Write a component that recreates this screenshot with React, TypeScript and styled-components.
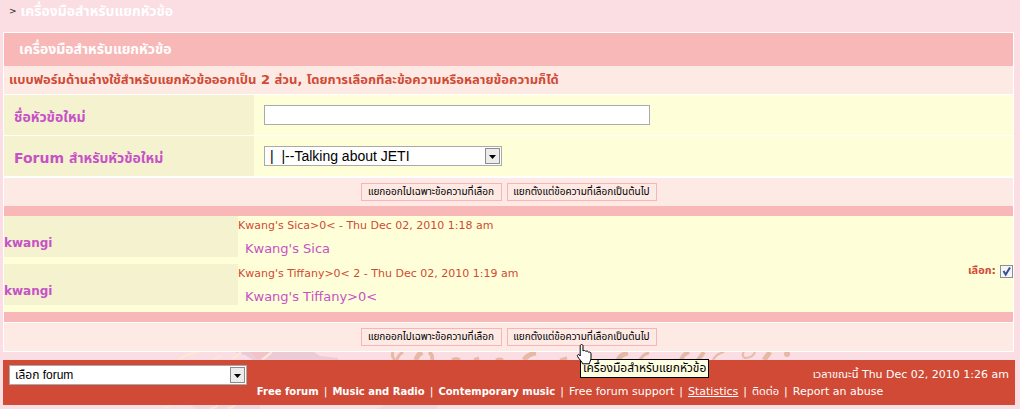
import React from "react";
import styled, { createGlobalStyle } from "styled-components";

const GlobalStyle = createGlobalStyle`
  *, *::before, *::after { box-sizing: border-box; }
  body {
    margin: 0;
    background: #fbdde4;
    color: #c652c6;
    font: 11px/14px "DejaVu Sans", "Noto Sans Thai", "Noto Sans", sans-serif;
  }
`;

const Page = styled.div`
  padding: 0 6px 0 3px;
`;

const Breadcrumb = styled.nav`
  display: flex;
  align-items: center;
  gap: 4px;
  height: 32px;
  padding: 0 6px 10px;
  color: #222;
  font-size: 9px;
`;

const Crumb = styled.a`
  color: #fff;
  font-size: 14px;
  font-weight: bold;
  text-decoration: none;
`;

const Panel = styled.form`
  display: flex;
  flex-direction: column;
  border: 1px solid #fff;
`;

const PanelTitle = styled.h1`
  margin: 0;
  padding: 8px 15px;
  background: #f8b8b8;
  color: #fff;
  font-size: 14px;
  line-height: 17px;
`;

const Intro = styled.p`
  margin: 0;
  padding: 5px;
  background: #feeae4;
  color: #d04a35;
  font-size: 13px;
  font-weight: bold;
  line-height: 18px;
`;

const Field = styled.div`
  display: grid;
  grid-template-columns: 250px 1fr;
  align-items: stretch;
  min-height: 41px;
  border-top: 1px solid #fff;
  background: #feffd8;
`;

const FieldLabel = styled.label`
  display: flex;
  align-items: center;
  padding: 4px 10px 0;
  background: #f5f2d0;
  font-size: 14px;
  font-weight: bold;
`;

const FieldControl = styled.div`
  display: flex;
  align-items: center;
  padding: 0 10px;
`;

const TextInput = styled.input`
  width: 386px;
  height: 20px;
  padding: 0 4px;
  border: 1px solid #aaa;
  background: #fff;
  font: 13px "Liberation Sans", sans-serif;
`;

const SelectFrame = styled.span<{ $width: number }>`
  position: relative;
  display: block;
  width: ${(p) => p.$width}px;
  height: 20px;
`;

const Select = styled.select<{ $size: number }>`
  appearance: none;
  display: block;
  width: 100%;
  height: 20px;
  padding: 0 20px 0 5px;
  border: 1px solid #aaa;
  border-radius: 0;
  background: #fff;
  color: #000;
  font: ${(p) => p.$size}px "Liberation Sans", "Noto Sans Thai", sans-serif;
`;

const SelectArrow = styled.svg`
  position: absolute;
  top: 2px;
  right: 2px;
  pointer-events: none;
`;

const Actions = styled.div<{ $line: number }>`
  display: flex;
  justify-content: center;
  align-items: center;
  gap: 5px;
  padding: 5px 0;
  border-top: ${(p) => p.$line}px solid #fff;
  background: #feeae4;
`;

const ActionButton = styled.button<{ $width: number }>`
  width: ${(p) => p.$width}px;
  height: 18px;
  padding: 0;
  border: 1px solid #f8b4b8;
  background: #feeae4;
  color: #000;
  font: 10px/14px "Liberation Sans", "Noto Sans Thai", sans-serif;
  white-space: nowrap;
`;

const Bar = styled.div`
  height: 10px;
  background: #f8b8b8;
`;

const Posts = styled.div`
  display: flex;
  flex-direction: column;
  background: #feffd8;
`;

const Post = styled.article`
  display: grid;
  grid-template-columns: 234px 1fr auto;
  align-items: start;
  height: 48px;
`;

const Author = styled.h2`
  margin: 0;
  padding: 19px 0 5px;
  background: #f5f2d0;
  font-size: 12px;
  line-height: 17px;
`;

const PostDate = styled.div`
  padding-top: 3px;
  color: #d04a35;
`;

const PostBody = styled.p`
  margin: 0;
  padding: 7px 7px 0;
  font-size: 13px;
  line-height: 17px;
`;

const Pick = styled.label`
  display: flex;
  align-items: center;
  gap: 4px;
  color: #d04a35;
  font-weight: bold;
`;

const PickBox = styled.input`
  appearance: none;
  width: 13px;
  height: 13px;
  margin: 0;
  border: 1px solid #8b8f96;
  background: #f3f5f7;
`;

const PickFrame = styled.span`
  position: relative;
  display: flex;
`;

const PickTick = styled.svg`
  position: absolute;
  inset: 0;
  pointer-events: none;
`;

const Strip = styled.div<{ $height: number }>`
  height: ${(p) => p.$height}px;
  overflow: hidden;

  svg { display: block; }
`;

const Footer = styled.footer`
  display: flex;
  flex-direction: column;
  margin-right: -1px;
  height: 45px;
  padding: 5px 6px 0;
  background: #d04a35;
  color: #fff;
`;

const FooterTop = styled.div`
  display: flex;
  justify-content: space-between;
  align-items: center;
`;

const FooterLinks = styled.nav`
  display: flex;
  justify-content: center;
  gap: 5px;
  padding-left: 122px;
`;

const FooterLink = styled.a<{ $bold?: boolean; $underline?: boolean }>`
  color: #fff;
  font-size: ${(p) => (p.$bold ? 10 : 11)}px;
  font-weight: ${(p) => (p.$bold ? "bold" : "normal")};
  text-decoration: ${(p) => (p.$underline ? "underline" : "none")};
`;

const Tooltip = styled.div`
  position: absolute;
  top: 359px;
  left: 580px;
  padding: 0 2px;
  border: 1px solid #000;
  background: #ffffe1;
  color: #000;
  font-size: 12px;
  line-height: 17px;
  white-space: nowrap;
`;

const Cursor = styled.svg`
  position: absolute;
  top: 343px;
  left: 576px;
`;

function DropDown({ id, label, value, size }: { id: string; label: string; value: string; size: number }) {
  return (
    <SelectFrame $width={238}>
      <Select id={id} aria-label={label} defaultValue={value} $size={size}>
        <option value={value}>{value}</option>
      </Select>
      <SelectArrow width="15" height="16" viewBox="0 0 15 16">
        <rect x=".5" y=".5" width="14" height="15" fill="#ececec" stroke="#8c8c8c" />
        <path d="M4 7h7l-3.500 4z" fill="#000" />
      </SelectArrow>
    </SelectFrame>
  );
}

function SplitActions({ line }: { line: number }) {
  return (
    <Actions $line={line}>
      <ActionButton type="button" $width={141}>แยกออกไปเฉพาะข้อความที่เลือก</ActionButton>
      <ActionButton type="button" $width={150}>แยกตั้งแต่ข้อความที่เลือกเป็นต้นไป</ActionButton>
    </Actions>
  );
}

/* Slivers of the decorative wallpaper that show above and below the footer. */
function WallpaperTop() {
  return (
    <svg width="1010" height="8" viewBox="3 0 1010 8" aria-hidden="true">
      <path d="M234 0h80l6 4 18 2v2h-85l-8-5z" fill="#ebcbd6" />
      <path d="M250 0h25l-8 6-10 1z" fill="#f3c3ca" />
      <g fill="none" stroke="#fbe6d9" strokeWidth="2.500">
        <path d="M179 8q8-7 20-8M232 8l9-8M262 8l10-8M213 8l8-4" />
      </g>
      <g fill="none" stroke="#e5b9a5" strokeWidth="3">
        <path d="M393 0q-2 4 2 8M403 0q-5 3-6 8" />
        <path d="M416 8q1-5 6-8" strokeWidth="5" />
        <path d="M429 0q4 3 3 8" strokeWidth="4" />
        <path d="M452 8q4-3 8 0M474 8l5-2M496 8q4-2 7 0" />
        <path d="M524 8q4-6 12-7M618 8q3-6 10-7" strokeWidth="5" />
        <path d="M560 8l7-2M640 8q3-6 9-7" />
        <path d="M681 8q2-6 8-8M698 8l6-8" strokeWidth="4" />
        <path d="M713 8q3-6 11-8M744 0q-3 4 1 6 8 0 10-6" strokeWidth="2" />
        <path d="M764 8l6-8" strokeWidth="5" />
      </g>
      <circle cx="787" cy="2" r="3" fill="#e5b9a5" />
    </svg>
  );
}

function WallpaperBottom() {
  return (
    <svg width="1010" height="4" viewBox="3 0 1010 4" aria-hidden="true">
      <path d="M190 0h70v4h-64zM385 0h52v4h-60z" fill="#f3d6df" />
      <path d="M210 3q4 1 8-3M228 3q5 0 7-3M165 3l6-3" fill="none" stroke="#fbe6d9" strokeWidth="2" />
    </svg>
  );
}

export default function App() {
  return (
    <>
      <GlobalStyle />
      <Page>
        <Breadcrumb>
          <span>&gt;</span>
          <Crumb href="#">เครื่องมือสำหรับแยกหัวข้อ</Crumb>
        </Breadcrumb>
        <Panel>
          <PanelTitle>เครื่องมือสำหรับแยกหัวข้อ</PanelTitle>
          <Intro>แบบฟอร์มด้านล่างใช้สำหรับแยกหัวข้อออกเป็น 2 ส่วน, โดยการเลือกทีละข้อความหรือหลายข้อความก็ได้</Intro>
          <Field>
            <FieldLabel htmlFor="subject">ชื่อหัวข้อใหม่</FieldLabel>
            <FieldControl><TextInput id="subject" /></FieldControl>
          </Field>
          <Field>
            <FieldLabel htmlFor="forum">Forum สำหรับหัวข้อใหม่</FieldLabel>
            <FieldControl>
              <DropDown id="forum" label="Forum สำหรับหัวข้อใหม่" value={"|\u00a0\u00a0|--Talking about JETI"} size={14} />
            </FieldControl>
          </Field>
          <SplitActions line={2} />
          <Bar />
          <Posts>
            <Post>
              <Author>kwangi</Author>
              <div>
                <PostDate>Kwang's Sica&gt;0&lt; - Thu Dec 02, 2010 1:18 am</PostDate>
                <PostBody>Kwang's Sica</PostBody>
              </div>
            </Post>
            <Post>
              <Author>kwangi</Author>
              <div>
                <PostDate>Kwang's Tiffany&gt;0&lt; 2 - Thu Dec 02, 2010 1:19 am</PostDate>
                <PostBody>Kwang's Tiffany&gt;0&lt;</PostBody>
              </div>
              <Pick>
                เลือก:
                <PickFrame>
                  <PickBox type="checkbox" defaultChecked />
                  <PickTick width="13" height="13" viewBox="0 0 13 13">
                    <path d="M3.500 6l2.200 3.500L10 2.500" fill="none" stroke="#3a4f94" strokeWidth="2" />
                  </PickTick>
                </PickFrame>
              </Pick>
            </Post>
          </Posts>
          <Bar />
          <SplitActions line={1} />
        </Panel>
        <Strip $height={8}><WallpaperTop /></Strip>
        <Footer>
          <FooterTop>
            <DropDown id="jump" label="เลือก forum" value="เลือก forum" size={12} />
            <span>เวลาขณะนี้ Thu Dec 02, 2010 1:26 am</span>
          </FooterTop>
          <FooterLinks>
            <FooterLink $bold href="#">Free forum</FooterLink>|
            <FooterLink $bold href="#">Music and Radio</FooterLink>|
            <FooterLink $bold href="#">Contemporary music</FooterLink>|
            <FooterLink href="#">Free forum support</FooterLink>|
            <FooterLink $underline href="#">Statistics</FooterLink>|
            <FooterLink href="#">ติดต่อ</FooterLink>|
            <FooterLink href="#">Report an abuse</FooterLink>
          </FooterLinks>
        </Footer>
        <Strip $height={4}><WallpaperBottom /></Strip>
      </Page>
      <Tooltip role="tooltip">เครื่องมือสำหรับแยกหัวข้อ</Tooltip>
      <Cursor width="17" height="22" viewBox="0 0 17 22" aria-hidden="true">
        <path d="M5.500 1.500c1 0 1.500.700 1.500 1.500v5c.500-.8 2.500-.7 2.800.5.700-.8 2.500-.5 2.700.8.800-.6 2.500-.3 2.500 1.500v4c0 3-1.500 3.500-1.500 6H6.500c0-2-4-5-5-7.500-.6-1.500 1-2.300 2-1.200l.7.900V3c0-.8.500-1.500 1.300-1.500z" fill="#fff" stroke="#000" />
      </Cursor>
    </>
  );
}
